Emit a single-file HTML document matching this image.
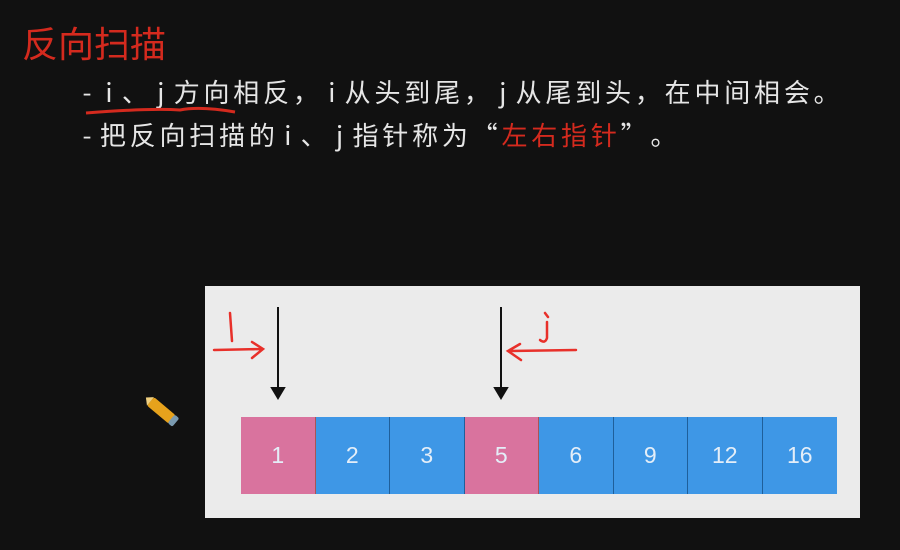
<!DOCTYPE html>
<html><head><meta charset="utf-8"><style>
body{margin:0;width:900px;height:550px;background:#111;overflow:hidden;position:relative;font-family:"Liberation Sans","Noto Sans CJK SC",sans-serif}
.t{position:absolute;left:22px;top:19px;color:#d42a1e;font-size:36px;font-family:"Noto Sans CJK SC",sans-serif;line-height:46px}
.l{position:absolute;left:76px;color:#e6e6e6;font-size:26px;font-family:"Noto Sans CJK SC",sans-serif;line-height:32px;white-space:nowrap}
.l span{display:inline-block;width:29.8px;text-align:center}
.l span.n{width:22px}
.r{color:#d42a1e}
.p{position:absolute;left:205px;top:286px;width:655px;height:232px;background:#ebebeb}
.c{position:absolute;top:417px;height:77px;width:74.5px;box-sizing:border-box;border-right:1px solid #1f5f9a;color:#e4eef8;font-size:23px;display:flex;align-items:center;justify-content:center}
.b{background:#3e97e6}.k{background:#d9739e;border-right-color:#a55}
</style></head><body>
<div class="t">反向扫描</div>
<div class="l" style="top:76px"><span class="n">-</span><span class="n">i</span><span>、</span><span class="n">j</span><span>方</span><span>向</span><span>相</span><span>反</span><span>，</span><span class="n">i</span><span>从</span><span>头</span><span>到</span><span>尾</span><span>，</span><span class="n">j</span><span>从</span><span>尾</span><span>到</span><span>头</span><span>，</span><span>在</span><span>中</span><span>间</span><span>相</span><span>会</span><span>。</span></div>
<div class="l" style="top:119px"><span class="n">-</span><span>把</span><span>反</span><span>向</span><span>扫</span><span>描</span><span>的</span><span class="n">i</span><span>、</span><span class="n">j</span><span>指</span><span>针</span><span>称</span><span>为</span><span>“</span><span class="r">左</span><span class="r">右</span><span class="r">指</span><span class="r">针</span><span>”</span><span>。</span></div>
<svg style="position:absolute;left:0;top:0" width="900" height="550">
<path d="M86 113 Q150 108 180 110 Q200 106 235 112" stroke="#d42a1e" stroke-width="3" fill="none"/>
</svg>
<div class="p"></div>
<div class="c k" style="left:241px">1</div>
<div class="c b" style="left:315.5px">2</div>
<div class="c b" style="left:390px">3</div>
<div class="c k" style="left:464.5px">5</div>
<div class="c b" style="left:539px">6</div>
<div class="c b" style="left:613.5px">9</div>
<div class="c b" style="left:688px">12</div>
<div class="c b" style="left:762.5px;border-right:none">16</div>
<svg style="position:absolute;left:0;top:0" width="900" height="550">
<g stroke="#111" stroke-width="2" fill="#111">
<line x1="278" y1="307" x2="278" y2="388"/><path d="M272 388 L284 388 L278 398Z"/>
<line x1="501" y1="307" x2="501" y2="388"/><path d="M495 388 L507 388 L501 398Z"/>
</g>
<g stroke="#e8302a" stroke-width="2.5" fill="none" stroke-linecap="round">
<path d="M230 313 L232 341"/><path d="M214 350 L262 349 M252 342 L263 349 L252 358"/>
<path d="M545 313 L548 317 M547 322 L547 338 Q545 344 540 340"/><path d="M576 350 L510 351 M520 344 L508 351 L521 360"/>
</g>
<g transform="translate(162,411) rotate(40)"><rect x="-15" y="-5.5" width="28" height="11" fill="#e6a21c" rx="2"/><rect x="12" y="-5.5" width="6" height="11" fill="#7a9ab0" rx="2"/><path d="M-15 -5.5 L-21 0 L-15 5.5Z" fill="#f0d080"/></g>
</svg>
</body></html>
